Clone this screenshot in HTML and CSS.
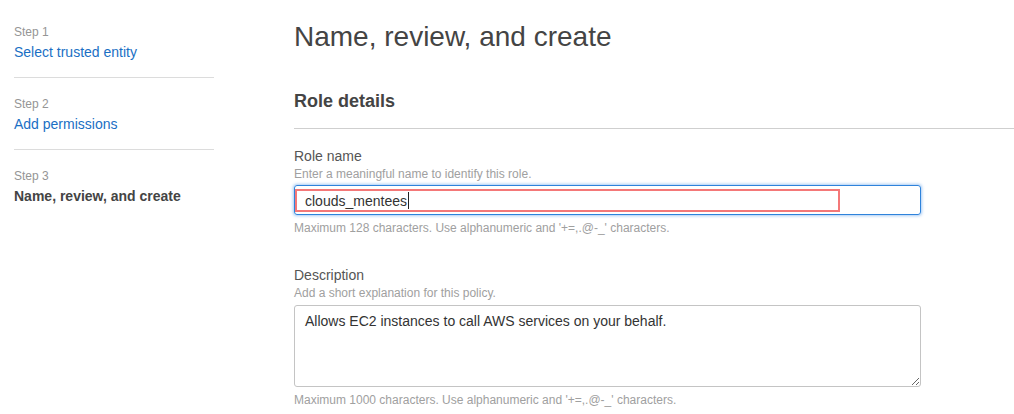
FILE: index.html
```html
<!DOCTYPE html>
<html>
<head>
<meta charset="utf-8">
<link rel="stylesheet" href="styles.css">
</head>
<body>
<div class="page">
  <nav class="steps">
    <div class="step">
      <div class="step-num">Step 1</div>
      <a class="step-link" href="#">Select trusted entity</a>
    </div>
    <div class="step">
      <div class="step-num">Step 2</div>
      <a class="step-link" href="#">Add permissions</a>
    </div>
    <div class="step last">
      <div class="step-num">Step 3</div>
      <div class="step-current">Name, review, and create</div>
    </div>
  </nav>
  <main class="main">
    <h1 class="title">Name, review, and create</h1>
    <section class="panel">
      <h2 class="panel-title">Role details</h2>
      <div class="field">
        <div class="label">Role name</div>
        <div class="hint">Enter a meaningful name to identify this role.</div>
        <div class="input focused">
          <span class="value">clouds_mentees</span><span class="caret"></span>
          <div class="annot"></div>
        </div>
        <div class="constraint">Maximum 128 characters. Use alphanumeric and '+=,.@-_' characters.</div>
      </div>
      <div class="field desc">
        <div class="label">Description</div>
        <div class="hint">Add a short explanation for this policy.</div>
        <textarea class="textarea">Allows EC2 instances to call AWS services on your behalf.</textarea>
        <div class="constraint">Maximum 1000 characters. Use alphanumeric and '+=,.@-_' characters.</div>
      </div>
    </section>
  </main>
</div>
</body>
</html>
```

FILE: styles.css
```css
* { box-sizing: border-box; }
html, body { margin: 0; padding: 0; background: #fff; }
body {
  font-family: "Liberation Sans", Arial, sans-serif;
  color: #444;
  overflow: hidden;
}
.page {
  display: flex;
  align-items: flex-start;
}
.steps {
  width: 214px;
  flex: none;
  padding: 6px 0 0 14px;
}
.step {
  padding: 18px 0 16px;
  border-bottom: 1px solid #dcdcdc;
}
.step.last { border-bottom: none; }
.step-num {
  font-size: 12px;
  line-height: 16px;
  color: #959595;
}
.step-link, .step-current {
  display: block;
  margin-top: 3px;
  font-size: 14px;
  line-height: 18px;
}
.step-link {
  color: #1a6fc4;
  text-decoration: none;
}
.step-current {
  font-weight: bold;
  color: #444;
}
.main {
  flex: 1;
  margin-left: 80px;
  padding-top: 20px;
}
.title {
  margin: 0;
  font-size: 28px;
  line-height: 34px;
  font-weight: normal;
  color: #444;
}
.panel-title {
  margin: 36px 0 0;
  padding-bottom: 16px;
  border-bottom: 1px solid #cfcfcf;
  font-size: 18px;
  line-height: 22px;
  font-weight: bold;
  color: #444;
}
.field {
  padding-top: 18px;
  width: 627px;
}
.field.desc { padding-top: 30px; }
.label {
  font-size: 14px;
  line-height: 18px;
  color: #555;
}
.hint {
  margin-top: 1px;
  font-size: 12px;
  line-height: 16px;
  color: #a0a0a0;
}
.input {
  position: relative;
  margin-top: 3px;
  height: 30px;
  border: 1px solid #2f83db;
  border-radius: 3px;
  box-shadow: 0 0 3px 1px rgba(60, 140, 230, 0.45);
  padding: 1px 0 0 10px;
  display: flex;
  align-items: center;
  font-size: 14px;
  color: #333;
}
.caret {
  display: inline-block;
  width: 1px;
  height: 17px;
  background: #222;
  margin-left: 1px;
}
.annot {
  position: absolute;
  left: 0;
  top: 3px;
  width: 545px;
  height: 23px;
  border: 2px solid #f47878;
}
.constraint {
  margin-top: 5px;
  font-size: 12px;
  line-height: 16px;
  color: #a0a0a0;
}
.textarea {
  display: block;
  margin-top: 4px;
  width: 627px;
  height: 82px;
  border: 1px solid #c4c4c4;
  border-radius: 3px;
  padding: 6px 10px;
  font-family: "Liberation Sans", Arial, sans-serif;
  font-size: 14px;
  line-height: 18px;
  color: #333;
  resize: vertical;
  outline: none;
}
```
